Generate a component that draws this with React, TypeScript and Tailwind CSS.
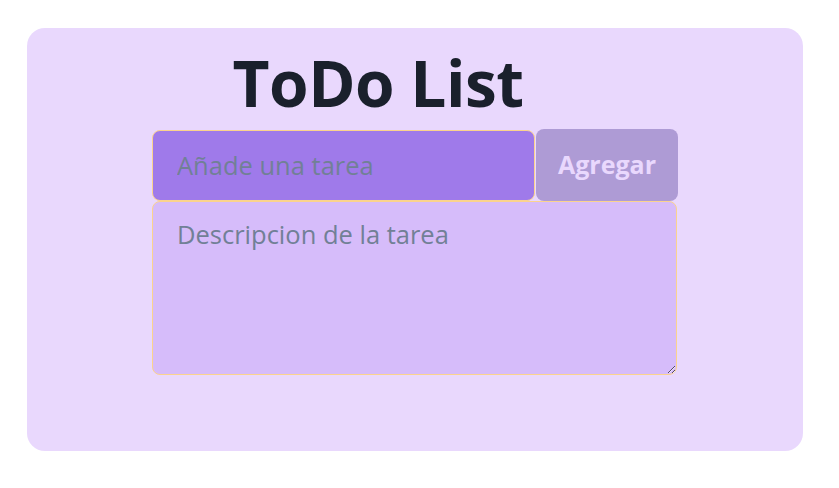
import { useState } from "react";

export default function App() {
  const [title, setTitle] = useState("");
  const [desc, setDesc] = useState("");

  return (
    <div className="min-h-[488px] w-full bg-white pt-[28px] pl-[27px] font-['Open_Sans',sans-serif]">
      <div className="flex h-[423px] w-[776px] flex-col items-center rounded-[18px] bg-[#e9d8fd] pt-[15px]">
        {/* Title */}
        <h1 className="mr-[74px] text-[64px] leading-[80px] font-bold tracking-[-0.5px] text-[#1a202c]">
          ToDo List
        </h1>

        {/* Form */}
        <form
          className="mt-[6px] flex w-[526px] flex-col"
          onSubmit={(e) => e.preventDefault()}
        >
          <div className="flex items-center">
            <input
              value={title}
              onChange={(e) => setTitle(e.target.value)}
              placeholder="Añade una tarea"
              className="h-[71px] w-[383px] rounded-lg border border-[#fbd38d] bg-[#9f7aea] pl-6 text-[25.5px] text-[#1a202c] outline-none placeholder:text-[#718096]"
            />
            <button
              type="submit"
              className="ml-px h-[72px] w-[142px] rounded-lg bg-[#ae9bd5] text-[25px] font-bold text-[#e9d8fd]"
            >
              Agregar
            </button>
          </div>
          <textarea
            value={desc}
            onChange={(e) => setDesc(e.target.value)}
            placeholder="Descripcion de la tarea"
            className="h-[174px] w-[525px] rounded-lg border border-[#fbd38d] bg-[#d6bcfa] px-6 pt-[13px] text-[25.5px] text-[#1a202c] outline-none placeholder:text-[#718096]"
          />
        </form>
      </div>
    </div>
  );
}
